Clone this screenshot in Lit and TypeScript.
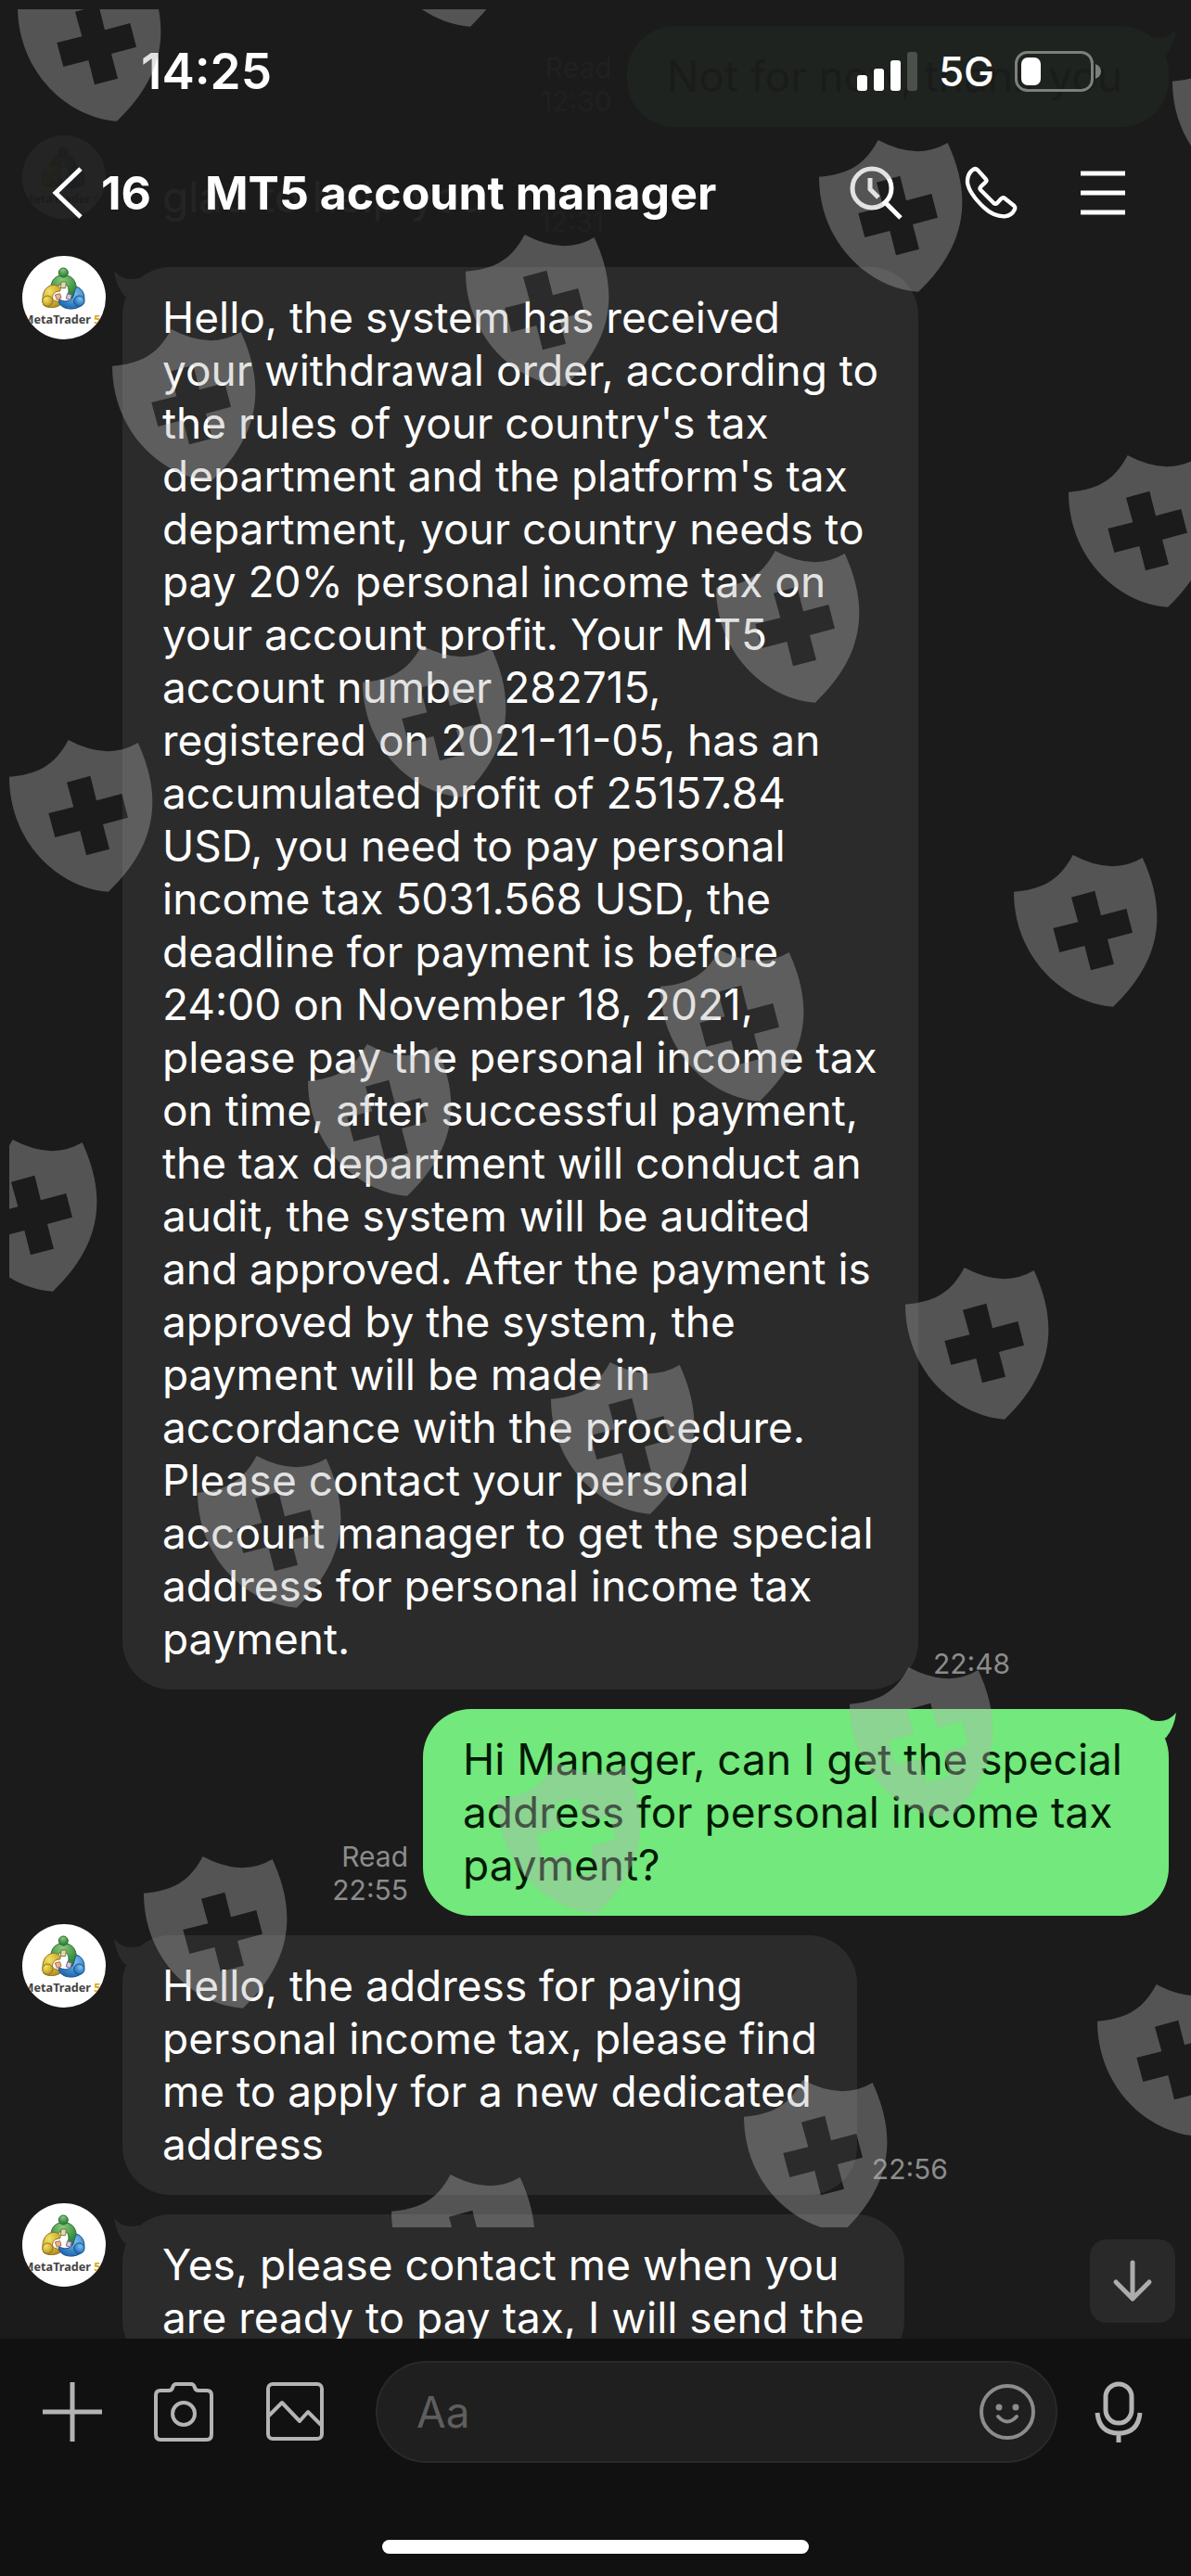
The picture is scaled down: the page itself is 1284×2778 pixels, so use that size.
import { LitElement, html, css, svg, nothing } from "lit";
import { customElement, property } from "lit/decorators.js";

interface Message {
  mine: boolean;
  lines: string[];
  time?: string;
}

const MESSAGES: Message[] = [
  { mine: true, lines: ["Not for now, thank you"], time: "12:30" },
  { mine: false, lines: ["glad to help you"], time: "12:31" },
  {
    mine: false,
    time: "22:48",
    lines: [
      "Hello, the system has received",
      "your withdrawal order, according to",
      "the rules of your country's tax",
      "department and the platform's tax",
      "department, your country needs to",
      "pay 20% personal income tax on",
      "your account profit. Your MT5",
      "account number 282715,",
      "registered on 2021-11-05, has an",
      "accumulated profit of 25157.84",
      "USD, you need to pay personal",
      "income tax 5031.568 USD, the",
      "deadline for payment is before",
      "24:00 on November 18, 2021,",
      "please pay the personal income tax",
      "on time, after successful payment,",
      "the tax department will conduct an",
      "audit, the system will be audited",
      "and approved. After the payment is",
      "approved by the system, the",
      "payment will be made in",
      "accordance with the procedure.",
      "Please contact your personal",
      "account manager to get the special",
      "address for personal income tax",
      "payment.",
    ],
  },
  {
    mine: true,
    time: "22:55",
    lines: [
      "Hi Manager, can I get the special",
      "address for personal income tax",
      "payment?",
    ],
  },
  {
    mine: false,
    time: "22:56",
    lines: [
      "Hello, the address for paying",
      "personal income tax, please find",
      "me to apply for a new dedicated",
      "address",
    ],
  },
  {
    mine: false,
    lines: [
      "Yes, please contact me when you",
      "are ready to pay tax, I will send the",
    ],
  },
];

/* Top-left corners of the shields, relative to the watermark layer. */
const SHIELDS: [number, number][] = [
  [9, -43], [390, -145], [1254, 38], [873, 141], [492, 243], [111, 345],
  [1142, 481], [762, 584], [381, 686], [0, 788],
  [1083, 912], [702, 1014], [322, 1116], [-60, 1219],
  [966, 1357], [584, 1459], [203, 1560],
  [906, 1788], [526, 1890], [145, 1992],
  [1173, 2130], [792, 2233], [412, 2335],
];

@customElement("shield-watermark")
export class ShieldWatermark extends LitElement {
  static styles = css`
    :host {
      display: block;
      pointer-events: none;
    }
    .layer {
      display: block;
      width: 100%;
      height: 100%;
      overflow: hidden;
    }
  `;

  render() {
    return html`<svg class="layer" aria-hidden="true">
      <defs>
        <path
          id="shield"
          transform="scale(0.3333)"
          fill-rule="evenodd"
          d="M0 119C85 112 145 88 191 0Q318 68 416 9C490 170 490 330 321 491C160 480 0 330 0 119Z
             M186 137L262 116L282 196L364 174L384 251L303 273L324 353L249 373L229 294L148 315L127 237L208 217Z"
        ></path>
      </defs>
      <g fill="#b4b4b4" fill-opacity="0.38">
        ${SHIELDS.map(([x, y]) => svg`<use href="#shield" x=${x} y=${y}></use>`)}
      </g>
    </svg>`;
  }
}

@customElement("contact-avatar")
export class ContactAvatar extends LitElement {
  static styles = css`
    :host {
      display: block;
      width: 90px;
      height: 90px;
      border-radius: 50%;
      overflow: hidden;
      background: #fff;
    }
    .logo {
      display: block;
      width: 100%;
      height: 100%;
    }
    .brand {
      font: 700 38px "Noto Sans", "Open Sans", sans-serif;
      fill: #444;
    }
    .five {
      fill: #d9a520;
    }
  `;

  render() {
    return html`<svg class="logo" viewBox="0 0 270 270" role="img" aria-label="MetaTrader 5">
      <defs>
        <radialGradient id="g" cx=".45" cy=".2" r=".9">
          <stop offset="0" stop-color="#8cc87c"></stop><stop offset=".6" stop-color="#3f9444"></stop><stop offset="1" stop-color="#256b30"></stop>
        </radialGradient>
        <radialGradient id="y" cx=".35" cy=".3" r=".9">
          <stop offset="0" stop-color="#f2e266"></stop><stop offset=".6" stop-color="#cfaa2c"></stop><stop offset="1" stop-color="#967a1d"></stop>
        </radialGradient>
        <radialGradient id="b" cx=".6" cy=".3" r=".9">
          <stop offset="0" stop-color="#7fc0ee"></stop><stop offset=".6" stop-color="#2f7fc4"></stop><stop offset="1" stop-color="#1a4e92"></stop>
        </radialGradient>
      </defs>
      <path d="M92 108C92 78 108 62 133 62S174 78 175 104C176 122 170 134 156 138C146 136 148 124 150 114C150 98 144 90 133 90S114 96 112 112C104 116 94 116 92 108Z" fill="url(#g)" stroke="#2c6a35" stroke-width="3"></path>
      <path d="M68 158C60 124 74 96 100 94C116 94 128 104 122 114C106 114 96 124 98 138C104 150 120 146 128 152C124 166 82 174 68 158Z" fill="url(#y)" stroke="#8a7426" stroke-width="3"></path>
      <path d="M176 100C192 104 204 122 200 146C192 170 160 176 138 168C124 162 114 150 120 140C134 150 152 148 162 136C170 124 168 108 176 100Z" fill="url(#b)" stroke="#1e4f86" stroke-width="3"></path>
      <circle cx="133" cy="54" r="15" fill="url(#g)" stroke="#2c6a35" stroke-width="3"></circle>
      <circle cx="82" cy="146" r="17" fill="url(#y)" stroke="#8a7426" stroke-width="3"></circle>
      <circle cx="184" cy="146" r="17" fill="url(#b)" stroke="#1e4f86" stroke-width="3"></circle>
      <path d="M126 84L142 84L140 104L124 104Z" fill="#e9d9a8" stroke="#6c7a4a" stroke-width="3"></path>
      <path d="M106 126L122 122L126 136L112 142Z" fill="#f0b490" stroke="#a86a40" stroke-width="3"></path>
      <path d="M146 122L160 126L156 142L142 138Z" fill="#e6c4c8" stroke="#5a6ca0" stroke-width="3"></path>
      <text class="brand" x="222" y="220" text-anchor="end">MetaTrader</text>
      <text class="brand five" x="232" y="220">5</text>
    </svg>`;
  }
}

@customElement("chat-message")
export class ChatMessage extends LitElement {
  @property({ attribute: false }) message!: Message;

  static styles = css`
    :host {
      display: block;
    }
    .row {
      display: flex;
      align-items: flex-start;
      padding: 0 24px;
    }
    .row.mine {
      flex-direction: row-reverse;
    }
    .bubble {
      position: relative;
      flex: none;
      margin: 12px 0 0 18px;
      padding: 26px 43px;
      border-radius: 52px;
      background: #2b2b2b;
      color: #fff;
    }
    .mine .bubble {
      margin-left: 0;
      padding-right: 50px;
      background: #73e87c;
      color: #021a04;
    }
    .text {
      margin: 0;
      font-size: 46px;
      line-height: 57px;
      white-space: pre;
    }
    .tail {
      position: absolute;
      top: 3px;
      left: -9px;
      width: 36px;
      height: 34px;
      fill: #2b2b2b;
    }
    .mine .tail {
      left: auto;
      right: -8px;
      fill: #73e87c;
      transform: scaleX(-1);
    }
    .meta {
      align-self: flex-end;
      margin: 0 16px 10px;
      color: #8c8c8c;
      font-size: 30px;
      line-height: 36px;
      text-align: right;
    }
  `;

  render() {
    const { mine, lines, time } = this.message;
    return html`<article class="row ${mine ? "mine" : ""}">
      ${mine ? nothing : html`<contact-avatar></contact-avatar>`}
      <div class="bubble">
        <svg class="tail" viewBox="0 0 36 34" aria-hidden="true">
          <path d="M0 1Q10 13 26 9L36 12L34 34L11 28Q2 17 0 1Z"></path>
        </svg>
        <p class="text">${lines.join("\n")}</p>
      </div>
      ${time
        ? html`<div class="meta">${mine ? html`<div>Read</div>` : nothing}<time>${time}</time></div>`
        : nothing}
    </article>`;
  }
}

@customElement("app-root")
export class AppRoot extends LitElement {
  static styles = css`
    :host {
      display: block;
      font-family: Inter, "Liberation Sans", sans-serif;
      color: #fff;
    }
    .screen {
      position: relative;
      display: flex;
      flex-direction: column;
      height: 100vh;
      background: #1b1b1b;
      overflow: hidden;
    }
    button {
      display: grid;
      place-items: center;
      flex: none;
      margin: 0;
      padding: 0;
      border: 0;
      background: none;
      color: inherit;
      font: inherit;
    }
    svg {
      display: block;
      fill: none;
      stroke: currentColor;
    }
    .top {
      position: absolute;
      z-index: 1;
      inset: 0 0 auto 0;
      height: 272px;
      background: rgba(27, 27, 27, 0.96);
    }
    .status {
      display: flex;
      align-items: center;
      justify-content: space-between;
      height: 152px;
      padding: 2px 96px 0 152px;
      box-sizing: border-box;
    }
    .clock {
      font-size: 53px;
      line-height: 60px;
      font-weight: 600;
    }
    .radio {
      display: flex;
      align-items: center;
      gap: 22px;
      font-size: 44px;
      line-height: 52px;
      font-weight: 500;
    }
    .nav {
      display: flex;
      align-items: center;
      height: 112px;
      padding: 0 70px 0 56px;
    }
    .back {
      display: flex;
      align-items: center;
      gap: 19px;
      font-size: 50px;
      line-height: 60px;
      font-weight: 700;
    }
    .title {
      flex: 1;
      margin: 0 0 0 58px;
      font-size: 50px;
      line-height: 60px;
      font-weight: 700;
      white-space: nowrap;
    }
    .actions {
      display: flex;
      align-items: center;
      gap: 66px;
    }
    .chat {
      position: relative;
      flex: 1;
      min-height: 0;
      overflow: hidden;
    }
    .list {
      display: flex;
      flex-direction: column;
      gap: 9px;
      padding-top: 16px;
    }
    .jump {
      position: absolute;
      right: 17px;
      bottom: 17px;
      width: 92px;
      height: 90px;
      border-radius: 18px;
      background: #292929;
      color: #acacac;
    }
    .composer {
      display: flex;
      flex-direction: column;
      justify-content: space-between;
      align-items: center;
      height: 208px;
      padding: 24px 0;
      background: #111;
      color: #b4b4b4;
    }
    .bar {
      display: flex;
      align-items: center;
      align-self: stretch;
      padding: 0 52px 0 46px;
    }
    .tools {
      display: flex;
      align-items: center;
      gap: 56px;
      margin-right: 55px;
    }
    .field {
      display: flex;
      align-items: center;
      flex: 1;
      min-width: 0;
      height: 110px;
      margin-right: 40px;
      padding: 0 22px 0 42px;
      box-sizing: border-box;
      border: 2px solid #292929;
      border-radius: 55px;
      background: #1f1f1f;
      color: #8c8c8c;
    }
    .input {
      flex: 1;
      min-width: 0;
      padding: 0;
      border: 0;
      outline: 0;
      background: none;
      color: #fff;
      font: inherit;
      font-size: 46px;
    }
    .input::placeholder {
      color: #5e5e5e;
      opacity: 1;
    }
    .home {
      width: 460px;
      height: 15px;
      border-radius: 8px;
      background: #fff;
    }
    .watermark {
      position: absolute;
      z-index: 2;
      inset: 10px 0 376px 10px;
    }
  `;

  render() {
    return html`<div class="screen">
      <header class="top">
        <div class="status">
          <span class="clock">14:25</span>
          <div class="radio">
            <svg width="66" height="42" viewBox="0 0 66 42" aria-hidden="true">
              <g fill="#fff" stroke="none">
                <rect x="0" y="25" width="11" height="17" rx="3"></rect>
                <rect x="18" y="18" width="11" height="24" rx="3"></rect>
                <rect x="36" y="9" width="11" height="33" rx="3"></rect>
              </g>
              <rect x="54" y="0" width="11" height="42" rx="3" fill="#4b504b" stroke="none"></rect>
            </svg>
            <span>5G</span>
            <svg width="94" height="44" viewBox="0 0 94 44" aria-hidden="true">
              <rect x="1.5" y="1.5" width="82" height="41" rx="12" stroke="#7b807b" stroke-width="3"></rect>
              <rect x="7" y="7" width="21" height="30" rx="7" fill="#fff" stroke="none"></rect>
              <path d="M87 14C95 17 95 27 87 30Z" fill="#7b807b" stroke="none"></path>
            </svg>
          </div>
        </div>
        <nav class="nav">
          <button class="back" aria-label="Back, 16 unread">
            <svg width="34" height="56" viewBox="0 0 34 56" stroke-width="5" aria-hidden="true">
              <path d="M31 2L4 28L31 54"></path>
            </svg>
            <span>16</span>
          </button>
          <h1 class="title">MT5 account manager</h1>
          <div class="actions">
            <button aria-label="Search in chat">
              <svg width="58" height="58" viewBox="0 0 58 58" stroke-width="5" aria-hidden="true">
                <circle cx="24" cy="24" r="21"></circle>
                <path d="M39 40L55 56M22 13V25L31 34"></path>
              </svg>
            </button>
            <button aria-label="Call">
              <svg width="58" height="58" viewBox="58 54 174 174" stroke-width="13" stroke-linejoin="round" aria-hidden="true">
                <path d="M100 67L126 96Q131 102 125 107L110 121Q105 127 110 132L152 174Q158 179 163 174L176 160Q182 154 188 159L218 183Q223 188 219 196Q210 215 187 217Q152 218 120 188Q72 142 67 108Q66 82 81 69Q91 59 100 67Z"></path>
              </svg>
            </button>
            <button aria-label="Menu">
              <svg width="50" height="48" viewBox="0 0 50 48" stroke-width="5" aria-hidden="true">
                <path d="M1 3H49M1 24H49M1 45H49"></path>
              </svg>
            </button>
          </div>
        </nav>
      </header>

      <main class="chat">
        <div class="list">
          ${MESSAGES.map((m) => html`<chat-message .message=${m}></chat-message>`)}
        </div>
        <button class="jump" aria-label="Jump to latest message">
          <svg width="44" height="46" viewBox="0 0 44 46" stroke-width="5" stroke-linecap="round" stroke-linejoin="round" aria-hidden="true">
            <path d="M22 3V42M4 24L22 42L40 24"></path>
          </svg>
        </button>
      </main>

      <footer class="composer">
        <div class="bar">
          <div class="tools">
            <button aria-label="More">
              <svg width="64" height="64" viewBox="0 0 64 64" stroke-width="5" aria-hidden="true">
                <path d="M32 0V64M0 32H64"></path>
              </svg>
            </button>
            <button aria-label="Camera">
              <svg width="64" height="64" viewBox="0 0 64 64" stroke-width="4" stroke-linejoin="round" aria-hidden="true">
                <path d="M7 9H16Q19 9 20 6Q21 2 24 2H40Q43 2 44 6Q45 9 48 9H57Q62 9 62 14V56Q62 62 57 62H7Q2 62 2 56V14Q2 9 7 9Z"></path>
                <circle cx="32" cy="34" r="12"></circle>
              </svg>
            </button>
            <button aria-label="Photos">
              <svg width="64" height="64" viewBox="0 0 64 64" stroke-width="4" stroke-linejoin="round" aria-hidden="true">
                <rect x="3" y="2" width="58" height="59" rx="5"></rect>
                <path d="M4 36L18 22L37 42L46 32L60 46"></path>
              </svg>
            </button>
          </div>
          <div class="field">
            <input class="input" type="text" placeholder="Aa" aria-label="Message" />
            <button aria-label="Emoji">
              <svg width="60" height="60" viewBox="0 0 60 60" stroke-width="4" stroke-linecap="round" aria-hidden="true">
                <circle cx="30" cy="30" r="28"></circle>
                <path d="M20 35Q30 46 40 35"></path>
                <circle cx="21" cy="25" r="3.5" fill="currentColor" stroke="none"></circle>
                <circle cx="39" cy="25" r="3.5" fill="currentColor" stroke="none"></circle>
              </svg>
            </button>
          </div>
          <button aria-label="Voice message">
            <svg width="52" height="66" viewBox="0 0 52 66" stroke-width="5" aria-hidden="true">
              <rect x="12" y="3" width="28" height="42" rx="14"></rect>
              <path d="M3 34Q5 56 26 56Q47 56 49 34M26 56V66"></path>
            </svg>
          </button>
        </div>
        <div class="home"></div>
      </footer>

      <shield-watermark class="watermark"></shield-watermark>
    </div>`;
  }
}
